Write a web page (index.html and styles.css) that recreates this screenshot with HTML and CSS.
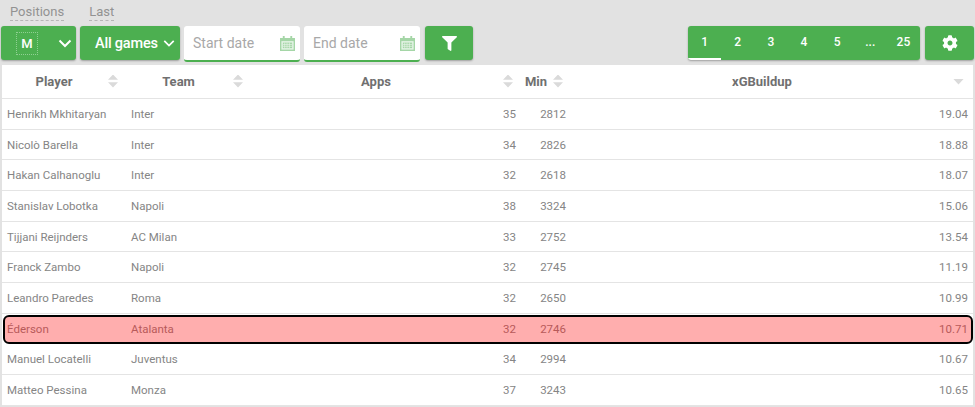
FILE: index.html
```html
<!DOCTYPE html>
<html lang="en">
<head>
<meta charset="utf-8">
<title>xGBuildup</title>
<link rel="stylesheet" href="styles.css">
</head>
<body>
<nav class="links"><a class="link">Positions</a><a class="link">Last</a></nav>
<div class="toolbar">
  <button class="btn btn-pos"><span class="focus">M</span><svg class="chev" viewBox="0 0 14 9"><path d="M1.500 1.500 7 7l5.500-5.500" fill="none" stroke="#fff" stroke-width="2"/></svg></button>
  <button class="btn btn-games">All games<svg class="chev" viewBox="0 0 14 9"><path d="M1.500 1.500 7 7l5.500-5.500" fill="none" stroke="#fff" stroke-width="2"/></svg></button>
  <label class="date"><span>Start date</span><svg class="cal" viewBox="0 0 16 16"><path d="M3 0h2v2h6V0h2v2h3v14H0V2h3z" fill="#a5d6a7"/><path d="M1.500 5.500h13v9h-13z" fill="#e8f5e9"/><path d="M3 7h10v6H3z" fill="#a5d6a7"/><path d="M5 7v6M7.500 7v6M10 7v6M3 9h10M3 11h10" stroke="#e8f5e9" stroke-width=".7"/></svg></label>
  <label class="date"><span>End date</span><svg class="cal" viewBox="0 0 16 16"><path d="M3 0h2v2h6V0h2v2h3v14H0V2h3z" fill="#a5d6a7"/><path d="M1.500 5.500h13v9h-13z" fill="#e8f5e9"/><path d="M3 7h10v6H3z" fill="#a5d6a7"/><path d="M5 7v6M7.500 7v6M10 7v6M3 9h10M3 11h10" stroke="#e8f5e9" stroke-width=".7"/></svg></label>
  <button class="btn btn-icon btn-filter"><svg viewBox="0 0 512 512"><path fill="#fff" d="M487.976 0H24.028C2.71 0-8.047 25.866 7.058 40.971L192 225.941V432c0 7.831 3.821 15.17 10.237 19.662l80 55.98C298.02 518.69 320 507.493 320 487.98V225.941l184.947-184.97C520.021 25.896 509.338 0 487.976 0z"/></svg></button>
  <div class="pages">
    <span class="page active">1</span><span class="page">2</span><span class="page">3</span><span class="page">4</span><span class="page">5</span><span class="page">...</span><span class="page">25</span>
  </div>
  <button class="btn btn-icon btn-gear"><svg viewBox="0 0 512 512"><path fill="#fff" d="M487.4 315.7l-42.6-24.6c4.3-23.2 4.3-47 0-70.2l42.6-24.6c4.900-2.800 7.100-8.600 5.500-14-11.100-35.600-30-67.800-54.700-94.600-3.800-4.100-10-5.100-14.800-2.300L380.800 110c-17.900-15.400-38.500-27.300-60.800-35.100V25.800c0-5.600-3.900-10.500-9.400-11.700-36.700-8.200-74.300-7.800-109.200 0-5.500 1.200-9.400 6.100-9.400 11.700V75c-22.200 7.900-42.800 19.800-60.800 35.100L88.700 85.500c-4.900-2.800-11-1.900-14.800 2.300-24.700 26.700-43.600 58.900-54.700 94.600-1.700 5.400.6 11.200 5.500 14L67.300 221c-4.300 23.200-4.300 47 0 70.200l-42.600 24.600c-4.900 2.800-7.100 8.600-5.500 14 11.100 35.600 30 67.800 54.700 94.600 3.800 4.100 10 5.100 14.800 2.300l42.600-24.600c17.900 15.400 38.500 27.300 60.800 35.100v49.200c0 5.600 3.900 10.500 9.400 11.700 36.700 8.200 74.300 7.800 109.200 0 5.500-1.200 9.400-6.100 9.400-11.700v-49.200c22.200-7.900 42.800-19.800 60.800-35.100l42.600 24.600c4.900 2.800 11 1.900 14.800-2.300 24.700-26.700 43.600-58.900 54.700-94.600 1.500-5.500-.7-11.300-5.600-14.100zM256 336c-44.100 0-80-35.900-80-80s35.900-80 80-80 80 35.900 80 80-35.900 80-80 80z"/></svg></button>
</div>
<table class="stats">
  <thead>
    <tr class="row head">
      <th>Player<i class="sort"></i></th>
      <th>Team<i class="sort"></i></th>
      <th>Apps<i class="sort"></i></th>
      <th>Min<i class="sort"></i></th>
      <th>xGBuildup<i class="sort down"></i></th>
    </tr>
  </thead>
  <tbody>
    <tr class="row"><td>Henrikh Mkhitaryan</td><td>Inter</td><td class="num">35</td><td class="num">2812</td><td class="num">19.04</td></tr>
    <tr class="row"><td>Nicolò Barella</td><td>Inter</td><td class="num">34</td><td class="num">2826</td><td class="num">18.88</td></tr>
    <tr class="row"><td>Hakan Calhanoglu</td><td>Inter</td><td class="num">32</td><td class="num">2618</td><td class="num">18.07</td></tr>
    <tr class="row"><td>Stanislav Lobotka</td><td>Napoli</td><td class="num">38</td><td class="num">3324</td><td class="num">15.06</td></tr>
    <tr class="row"><td>Tijjani Reijnders</td><td>AC Milan</td><td class="num">33</td><td class="num">2752</td><td class="num">13.54</td></tr>
    <tr class="row"><td>Franck Zambo</td><td>Napoli</td><td class="num">32</td><td class="num">2745</td><td class="num">11.19</td></tr>
    <tr class="row"><td>Leandro Paredes</td><td>Roma</td><td class="num">32</td><td class="num">2650</td><td class="num">10.99</td></tr>
    <tr class="row hl"><td>Éderson</td><td>Atalanta</td><td class="num">32</td><td class="num">2746</td><td class="num">10.71</td></tr>
    <tr class="row"><td>Manuel Locatelli</td><td>Juventus</td><td class="num">34</td><td class="num">2994</td><td class="num">10.67</td></tr>
    <tr class="row"><td>Matteo Pessina</td><td>Monza</td><td class="num">37</td><td class="num">3243</td><td class="num">10.65</td></tr>
  </tbody>
</table>
</body>
</html>
```
FILE: styles.css
```css
* { box-sizing: border-box; }
html, body { height: 100%; }
body {
  margin: 0;
  background: #e2e2e2;
  font-family: Roboto, "Liberation Sans", sans-serif;
  overflow: hidden;
}
.links {
  display: flex;
  gap: 25px;
  height: 26px;
  padding: 4px 0 0 10px;
}
.link {
  height: 17px;
  font-size: 13px;
  line-height: 15px;
  color: #929292;
  border-bottom: 1px dashed #b5b5b5;
}
.toolbar {
  display: flex;
  align-items: flex-start;
  height: 34px;
  padding: 0 1px;
}
.btn {
  display: flex;
  align-items: center;
  height: 34px;
  padding: 0;
  border: 0;
  border-radius: 3px;
  background: #4caf50;
  color: #fff;
  font: 500 14.500px Roboto, sans-serif;
  box-shadow: 0 1px 2px rgba(0, 0, 0, .3);
}
.btn-pos { width: 75px; margin-right: 4px; padding: 0 0 0 15px; justify-content: space-between; }
.focus {
  display: block;
  width: 22px;
  height: 23px;
  border: 1px dotted #8fd092;
  text-align: center;
  line-height: 21px;
  font-size: 13px;
}
.chev { width: 14px; height: 9px; flex: none; margin-right: 4px; }
.btn-games { width: 100px; margin-right: 4px; padding-left: 15px; gap: 5px; white-space: nowrap; letter-spacing: -.2px; }
.btn-games .chev { width: 12px; margin-right: 0; }
.date {
  display: flex;
  align-items: center;
  justify-content: space-between;
  width: 116px;
  height: 36px;
  margin-right: 4px;
  padding: 0 5px 0 9px;
  border-bottom: 2px solid #4caf50;
  border-radius: 3px;
  background: #fff;
  color: #a8a8a8;
  font-size: 14px;
}
.cal { width: 15px; height: 17px; }
.btn-icon { justify-content: center; }
.btn-filter { width: 48px; margin-left: 1px; }
.btn-filter svg { width: 15px; height: 15px; }
.pages {
  display: flex;
  width: 232px;
  height: 34px;
  margin-left: auto;
  border-radius: 3px;
  background: #4caf50;
  box-shadow: 0 1px 2px rgba(0, 0, 0, .3);
  overflow: hidden;
}
.page {
  flex: 1;
  text-align: center;
  line-height: 33px;
  height: 34px;
  color: #fff;
  font-size: 12px;
  font-weight: 500;
}
.page.active { border-bottom: 2px solid #fff; }
.btn-gear { width: 49px; margin-left: 5px; }
.btn-gear svg { width: 16px; height: 16px; }
.stats {
  display: block;
  width: 971px;
  margin: 5px 0 0 2px;
  background: #fff;
  border-collapse: collapse;
  color: #858585;
  font-size: 11.500px;
}
.stats thead, .stats tbody { display: block; }
.row {
  display: grid;
  grid-template-columns: 124px 125px 270px 50px 1fr;
  align-items: center;
  height: 30.700px;
  border-bottom: 1px solid #e4e4e4;
}
.row td { padding: 0 5px; }
.row td.num { text-align: right; }
.head { height: 34px; }
.head th {
  position: relative;
  padding: 0 20px 0 0;
  font-size: 13px;
  font-weight: 700;
  color: #707070;
  text-align: center;
}
.sort {
  position: absolute;
  right: 8px;
  top: 50%;
  width: 10px;
  height: 13px;
  margin-top: -7px;
  background: #dadada;
  clip-path: polygon(50% 0, 100% 40%, 0 40%, 0 60%, 100% 60%, 50% 100%, 0 60%, 0 40%);
}
.sort.down {
  right: 9px;
  height: 6px;
  width: 11px;
  margin-top: -3px;
  clip-path: polygon(0 0, 100% 0, 50% 100%);
}
.hl {
  position: relative;
  z-index: 1;
  height: 28.700px;
  margin: 1px 0 1px 1px;
  border: 2px solid #000;
  border-radius: 6px;
  background: #ffaeae;
  color: #b75a5a;
  grid-template-columns: 121px 125px 270px 50px 1fr;
}
.hl td:last-child { padding-right: 3px; }
.hl td:first-child { padding-left: 2px; }
```
